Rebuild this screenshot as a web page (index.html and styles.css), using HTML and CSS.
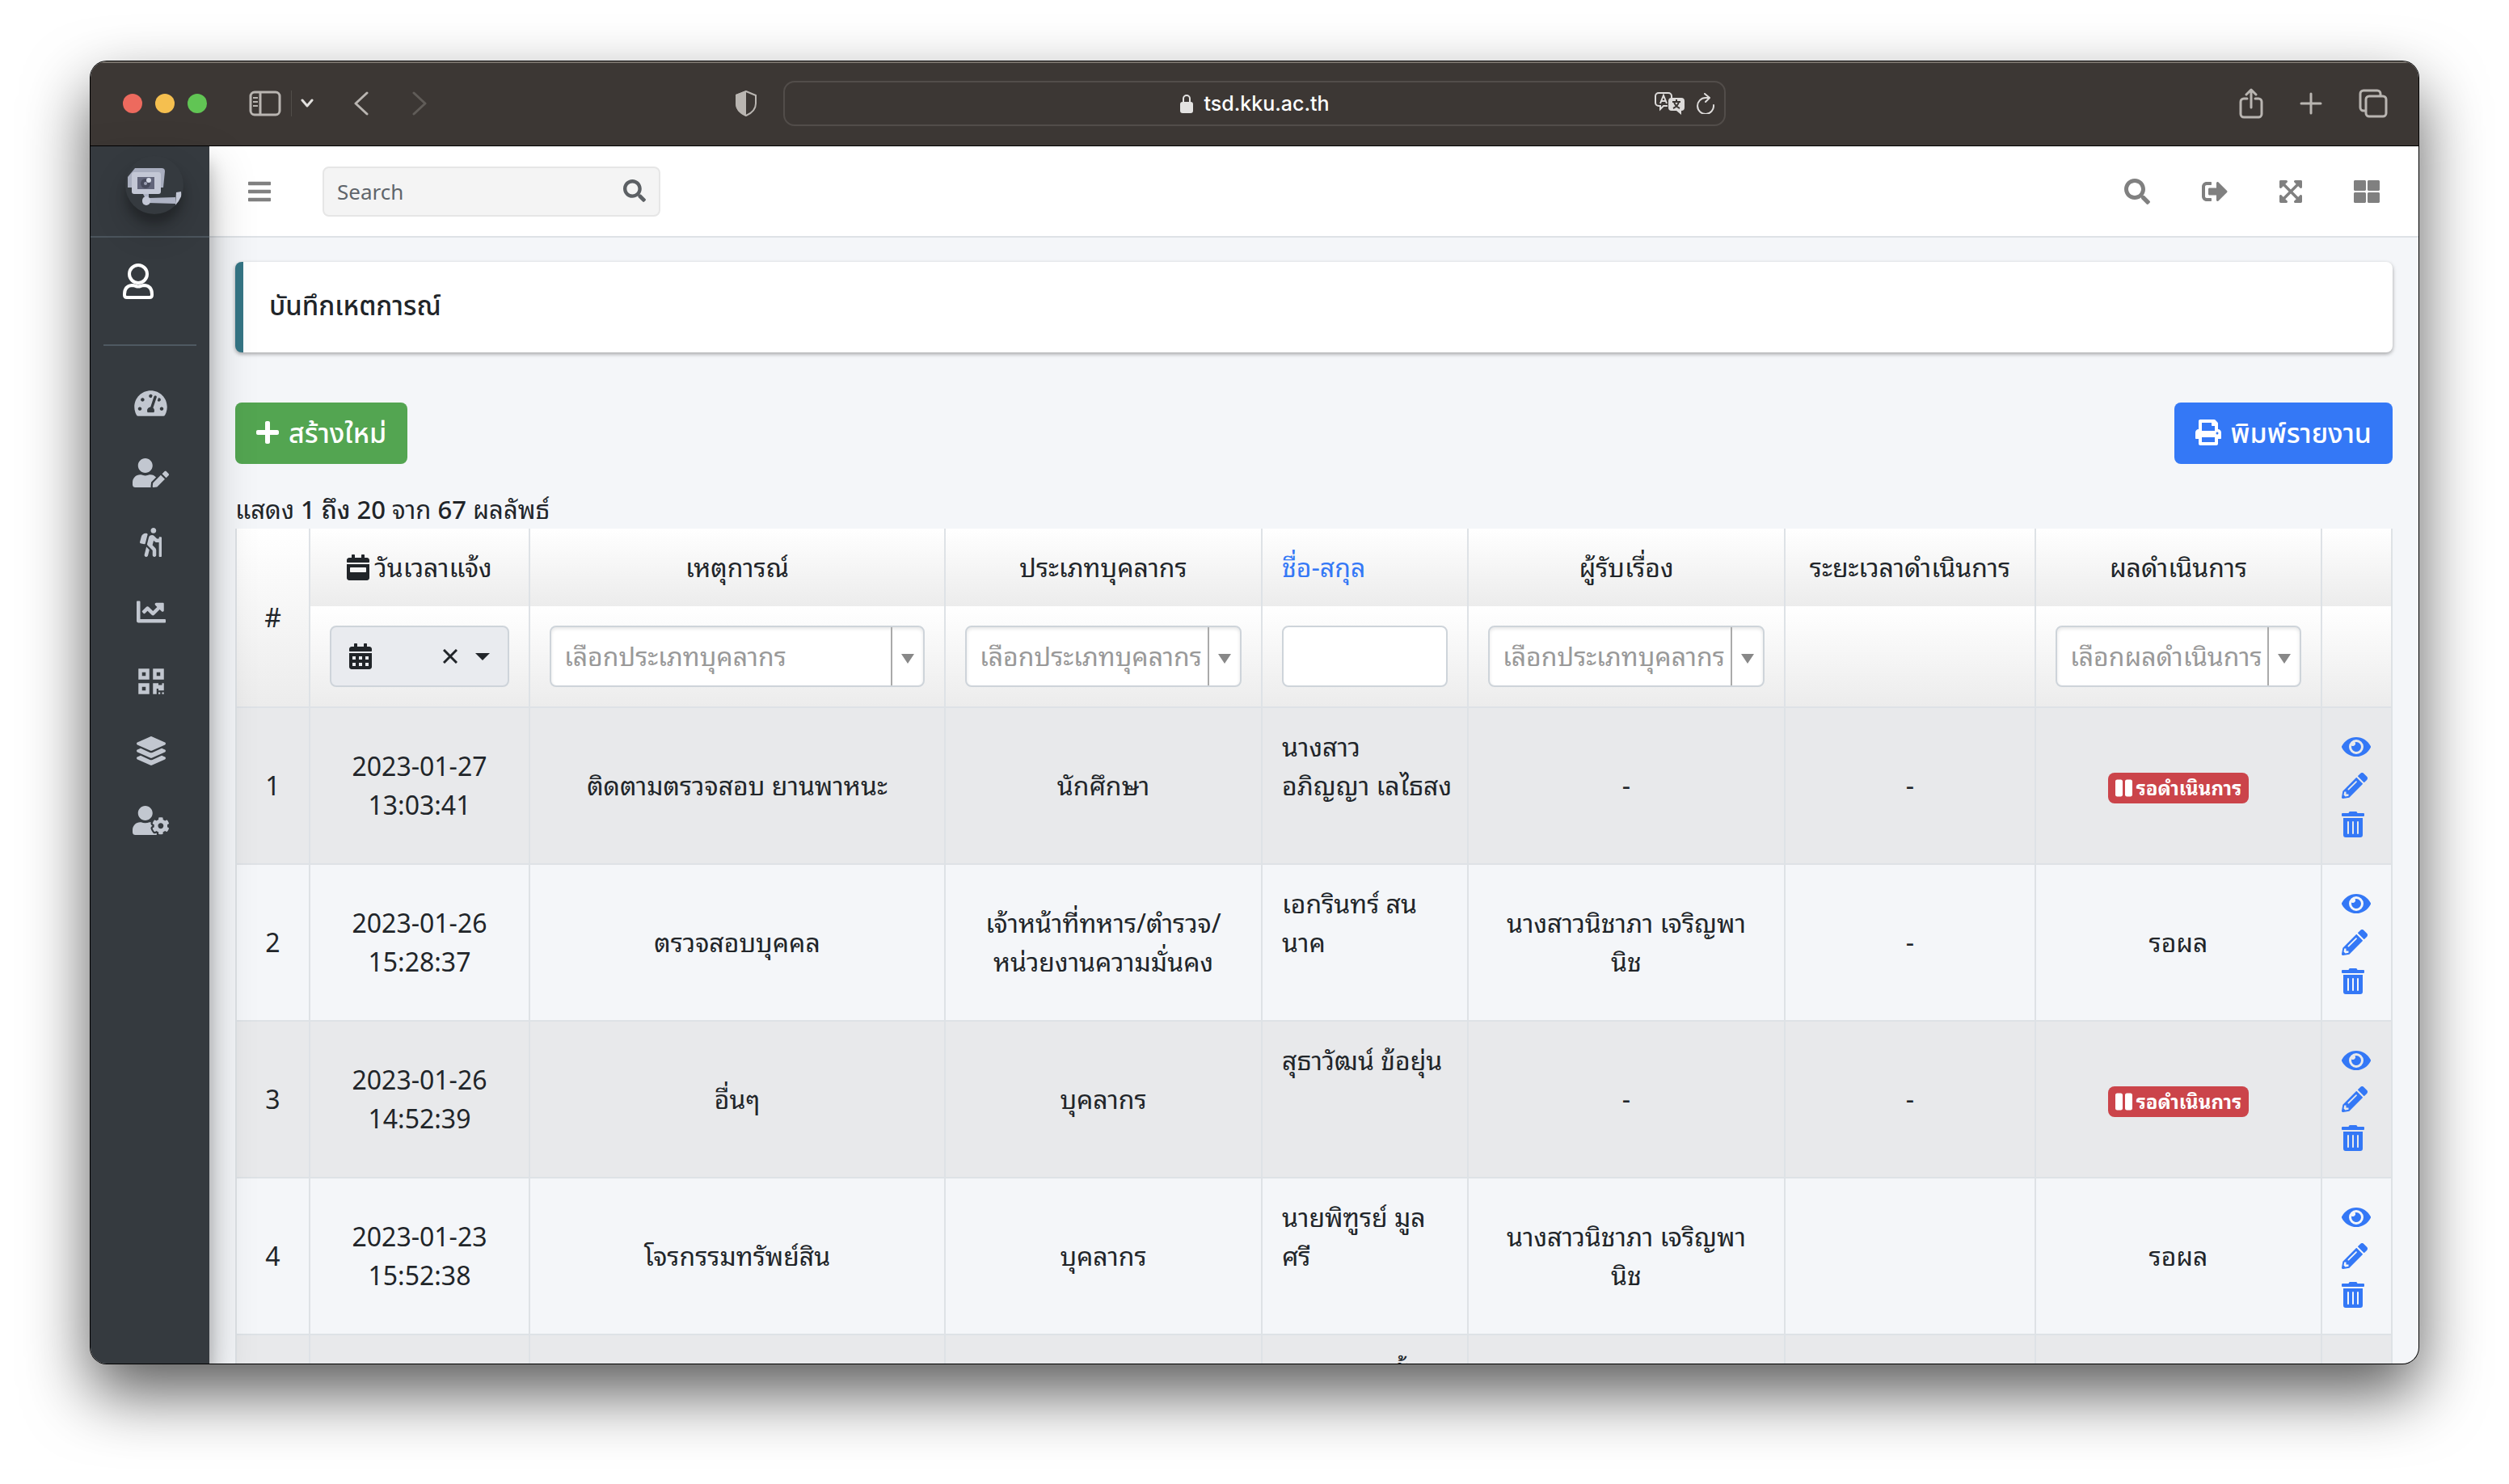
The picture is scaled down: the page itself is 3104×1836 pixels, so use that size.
FILE: index.html
```html
<!DOCTYPE html>
<html lang="th">
<head>
<meta charset="utf-8">
<title>บันทึกเหตการณ์</title>
<link rel="stylesheet" href="styles.css">
</head>
<body>
<svg class="sprite" aria-hidden="true">
  <symbol id="bars" viewBox="0 0 448 512"><path d="M16 132h416c8.837 0 16-7.163 16-16V76c0-8.837-7.163-16-16-16H16C7.163 60 0 67.163 0 76v40c0 8.837 7.163 16 16 16zm0 160h416c8.837 0 16-7.163 16-16v-40c0-8.837-7.163-16-16-16H16c-8.837 0-16 7.163-16 16v40c0 8.837 7.163 16 16 16zm0 160h416c8.837 0 16-7.163 16-16v-40c0-8.837-7.163-16-16-16H16c-8.837 0-16 7.163-16 16v40c0 8.837 7.163 16 16 16z"/></symbol>
  <symbol id="search" viewBox="0 0 512 512"><path d="M505 442.7L405.3 343c-4.5-4.5-10.6-7-17-7H372c27.6-35.3 44-79.7 44-128C416 93.1 322.9 0 208 0S0 93.1 0 208s93.1 208 208 208c48.3 0 92.7-16.4 128-44v16.3c0 6.4 2.5 12.5 7 17l99.7 99.7c9.4 9.4 24.6 9.4 33.9 0l28.3-28.3c9.4-9.4 9.4-24.6.1-34zM208 336c-70.7 0-128-57.2-128-128 0-70.7 57.2-128 128-128 70.7 0 128 57.2 128 128 0 70.7-57.2 128-128 128z"/></symbol>
  <symbol id="signout" viewBox="0 0 512 512"><path d="M497 273L329 441c-15 15-41 4.5-41-17v-96H152c-13.3 0-24-10.7-24-24v-96c0-13.3 10.7-24 24-24h136V88c0-21.4 25.9-32 41-17l168 168c9.3 9.4 9.3 24.6 0 34zM192 436v-40c0-6.6-5.4-12-12-12H96c-17.7 0-32-14.3-32-32V160c0-17.7 14.3-32 32-32h84c6.6 0 12-5.4 12-12V76c0-6.6-5.4-12-12-12H96c-53 0-96 43-96 96v192c0 53 43 96 96 96h84c6.6 0 12-5.4 12-12z"/></symbol>
  <symbol id="expand" viewBox="0 0 448 512"><path d="M448 344v112a23.94 23.94 0 0 1-24 24H312c-21.39 0-32.09-25.9-17-41l36.2-36.2L224 295.6 116.77 402.9 153 439c15.09 15.1 4.39 41-17 41H24a23.94 23.94 0 0 1-24-24V344c0-21.4 25.89-32.1 41-17l36.19 36.2L184.46 256 77.18 148.7 41 185c-15.1 15.1-41 4.4-41-17V56a23.94 23.94 0 0 1 24-24h112c21.39 0 32.09 25.9 17 41l-36.2 36.2L224 216.4l107.23-107.3L295 73c-15.09-15.1-4.39-41 17-41h112a23.94 23.94 0 0 1 24 24v112c0 21.4-25.89 32.1-41 17l-36.19-36.2L263.54 256l107.28 107.3L407 327.1c15.1-15.2 41-4.5 41 16.9z"/></symbol>
  <symbol id="tiles" viewBox="0 0 512 512"><path d="M296 32h192c13.255 0 24 10.745 24 24v160c0 13.255-10.745 24-24 24H296c-13.255 0-24-10.745-24-24V56c0-13.255 10.745-24 24-24zm-80 0H24C10.745 32 0 42.745 0 56v160c0 13.255 10.745 24 24 24h192c13.255 0 24-10.745 24-24V56c0-13.255-10.745-24-24-24zM0 296v160c0 13.255 10.745 24 24 24h192c13.255 0 24-10.745 24-24V296c0-13.255-10.745-24-24-24H24c-13.255 0-24 10.745-24 24zm296 184h192c13.255 0 24-10.745 24-24V296c0-13.255-10.745-24-24-24H296c-13.255 0-24 10.745-24 24v160c0 13.255 10.745 24 24 24z"/></symbol>
  <symbol id="gauge" viewBox="0 0 576 512"><path d="M288 32C128.94 32 0 160.94 0 320c0 52.8 14.25 102.26 39.06 144.8 5.61 9.62 16.3 15.2 27.44 15.2h443c11.14 0 21.83-5.58 27.44-15.2C561.75 422.26 576 372.8 576 320c0-159.06-128.94-288-288-288zm0 64c14.71 0 26.58 10.13 30.32 23.65-1.11 2.26-2.64 4.23-3.45 6.67l-9.22 27.67c-5.13 3.49-10.97 6.01-17.64 6.01-17.67 0-32-14.33-32-32S270.33 96 288 96zM96 384c-17.67 0-32-14.33-32-32s14.33-32 32-32 32 14.33 32 32-14.33 32-32 32zm48-160c-17.67 0-32-14.33-32-32s14.33-32 32-32 32 14.33 32 32-14.33 32-32 32zm246.77-72.41l-61.33 184C343.13 347.33 352 364.54 352 384c0 11.72-3.38 22.55-8.88 32H232.88c-5.5-9.45-8.88-20.28-8.88-32 0-33.94 26.5-61.43 59.9-63.59l61.34-184.01c4.17-12.56 17.73-19.45 30.36-15.17 12.57 4.19 19.35 17.79 15.17 30.36zm14.66 57.2l15.52-46.55c3.47-1.29 7.13-2.23 11.05-2.23 17.67 0 32 14.33 32 32s-14.33 32-32 32c-11.38-.01-20.89-6.28-26.57-15.22zM480 384c-17.67 0-32-14.33-32-32s14.33-32 32-32 32 14.33 32 32-14.33 32-32 32z"/></symbol>
  <symbol id="user-edit" viewBox="0 0 640 512"><path d="M224 256c70.7 0 128-57.3 128-128S294.7 0 224 0 96 57.3 96 128s57.3 128 128 128zm89.6 32h-16.7c-22.2 10.2-46.9 16-72.9 16s-50.6-5.8-72.9-16h-16.7C60.2 288 0 348.2 0 422.4V464c0 26.5 21.5 48 48 48h274.9c-2.4-6.8-3.4-14-2.6-21.3l6.8-60.9 1.2-11.1 7.9-7.9 77.3-77.3c-24.5-27.7-60-45.5-99.9-45.5zm45.3 145.3l-6.8 61c-1.1 10.2 7.5 18.8 17.6 17.6l60.9-6.8 137.9-137.9-71.7-71.7-137.9 137.8zM633 268.9L595.1 231c-9.3-9.3-24.5-9.3-33.8 0l-37.8 37.8-4.1 4.1 71.8 71.7 41.8-41.8c9.3-9.4 9.3-24.5 0-33.9z"/></symbol>
  <symbol id="hiking" viewBox="0 0 384 512"><path d="M80.95 472.23c-4.28 17.16 6.14 34.53 23.28 38.81 2.61.66 5.22.95 7.8.95 14.33 0 27.37-9.7 31.02-24.23l25.24-100.97-52.78-52.78-34.56 138.22zm14.89-196.12L137 117c2.19-8.42-3.14-16.95-11.92-19.06-43.88-10.52-88.35 15.07-99.32 57.17L.49 253.24c-2.19 8.42 3.14 16.95 11.92 19.06l63.56 15.25c8.79 2.1 17.68-3.02 19.87-11.44zM368 160h-16c-8.84 0-16 7.16-16 16v16h-34.75l-46.78-46.78C243.38 134.11 228.61 128 212.91 128c-27.02 0-50.47 18.3-57.03 44.52l-26.92 107.72a32.012 32.012 0 0 0 8.42 30.39L224 397.25V480c0 17.67 14.33 32 32 32s32-14.33 32-32v-82.75c0-17.09-6.66-33.16-18.75-45.25l-46.82-46.82c.15-.5.49-.89.62-1.41l19.89-79.57 22.43 22.43c6 6 14.14 9.38 22.62 9.38h48v240c0 8.84 7.16 16 16 16h16c8.84 0 16-7.16 16-16V176c.01-8.84-7.15-16-15.99-16zM240 96c26.51 0 48-21.49 48-48S266.51 0 240 0s-48 21.49-48 48 21.49 48 48 48z"/></symbol>
  <symbol id="chart" viewBox="0 0 512 512"><path d="M496 384H64V80c0-8.84-7.16-16-16-16H16C7.16 64 0 71.16 0 80v336c0 17.67 14.33 32 32 32h464c8.84 0 16-7.16 16-16v-32c0-8.84-7.16-16-16-16zM464 96H345.94c-21.38 0-32.09 25.85-16.97 40.97l32.4 32.4L288 242.75l-73.37-73.37c-12.5-12.5-32.76-12.5-45.25 0l-68.69 68.69c-6.25 6.25-6.25 16.38 0 22.63l22.62 22.62c6.25 6.25 16.38 6.25 22.63 0L192 237.25l73.37 73.37c12.5 12.5 32.76 12.5 45.25 0l96-96 32.4 32.4c15.12 15.12 40.97 4.41 40.97-16.97V112c.01-8.84-7.15-16-15.99-16z"/></symbol>
  <symbol id="qrcode" viewBox="0 0 448 512"><path d="M0 224h192V32H0v192zM64 96h64v64H64V96zm192-64v192h192V32H256zm128 128h-64V96h64v64zM0 480h192V288H0v192zm64-128h64v64H64v-64zm352-64h32v128h-96v-32h-32v96h-64V288h96v32h64v-32zm0 160h32v32h-32v-32zm-64 0h32v32h-32v-32z"/></symbol>
  <symbol id="layers" viewBox="0 0 512 512"><path d="M12.41 148.02l232.94 105.67c6.8 3.09 14.49 3.09 21.29 0l232.94-105.67c16.55-7.51 16.55-32.52 0-40.03L266.65 2.31a25.607 25.607 0 0 0-21.29 0L12.41 107.98c-16.55 7.51-16.55 32.53 0 40.04zm487.18 88.28l-58.09-26.33-161.64 73.27c-7.56 3.43-15.59 5.17-23.86 5.17s-16.29-1.74-23.86-5.17L70.51 209.97l-58.1 26.33c-16.55 7.5-16.55 32.5 0 40l232.94 105.59c6.8 3.08 14.49 3.08 21.29 0L499.59 276.3c16.55-7.5 16.55-32.5 0-40zm0 127.8l-57.87-26.23-161.86 73.37c-7.56 3.43-15.59 5.17-23.86 5.17s-16.29-1.74-23.86-5.17L70.29 337.87 12.41 364.1c-16.55 7.5-16.55 32.5 0 40l232.94 105.59c6.8 3.08 14.49 3.08 21.29 0L499.59 404.1c16.55-7.5 16.55-32.5 0-40z"/></symbol>
  <symbol id="user-cog" viewBox="0 0 640 512"><path d="M610.5 373.3c2.6-14.1 2.6-28.5 0-42.6l25.8-14.9c3-1.7 4.3-5.2 3.3-8.5-6.7-21.6-18.2-41.2-33.2-57.4-2.3-2.5-6-3.1-9-1.4l-25.8 14.9c-10.9-9.3-23.4-16.5-36.9-21.3v-29.8c0-3.4-2.4-6.4-5.7-7.1-22.3-5-45-4.8-66.2 0-3.3.7-5.7 3.7-5.7 7.1v29.8c-13.5 4.8-26 12-36.9 21.3l-25.8-14.9c-2.9-1.7-6.7-1.1-9 1.4-15 16.2-26.5 35.8-33.2 57.4-1 3.3.4 6.8 3.3 8.5l25.8 14.9c-2.6 14.1-2.6 28.5 0 42.6l-25.8 14.9c-3 1.7-4.3 5.2-3.3 8.5 6.7 21.6 18.2 41.1 33.2 57.4 2.3 2.5 6 3.1 9 1.4l25.8-14.9c10.9 9.3 23.4 16.5 36.9 21.3v29.8c0 3.4 2.4 6.4 5.7 7.1 22.3 5 45 4.8 66.2 0 3.3-.7 5.7-3.7 5.7-7.1v-29.8c13.5-4.8 26-12 36.9-21.3l25.8 14.9c2.9 1.7 6.7 1.1 9-1.4 15-16.2 26.5-35.8 33.2-57.4 1-3.3-.4-6.8-3.3-8.5l-25.8-14.9zM496 400.5c-26.8 0-48.5-21.8-48.5-48.5s21.8-48.5 48.5-48.5 48.5 21.8 48.5 48.5-21.7 48.5-48.5 48.5zM224 256c70.7 0 128-57.3 128-128S294.7 0 224 0 96 57.3 96 128s57.3 128 128 128zm201.2 226.5c-2.3-1.2-4.6-2.6-6.8-3.9l-7.9 4.6c-6 3.4-12.8 5.3-19.6 5.3-10.9 0-21.4-4.6-28.9-12.6-18.3-19.8-32.3-43.9-40.2-69.6-5.5-17.7 1.9-36.4 17.9-45.7l7.9-4.6c-.1-2.6-.1-5.2 0-7.8l-7.9-4.6c-16-9.2-23.4-28-17.9-45.7.9-2.9 2.2-5.8 3.2-8.7-3.8-.3-7.5-1.2-11.4-1.2h-16.7c-22.2 10.2-46.9 16-72.9 16s-50.6-5.8-72.9-16h-16.7C60.2 288 0 348.2 0 422.4V464c0 26.5 21.5 48 48 48h352c10.1 0 19.5-3.2 27.2-8.5-1.2-3.8-2-7.7-2-11.8v-9.2z"/></symbol>
  <symbol id="plus" viewBox="0 0 448 512"><path d="M416 208H272V64c0-17.67-14.33-32-32-32h-32c-17.67 0-32 14.33-32 32v144H32c-17.67 0-32 14.33-32 32v32c0 17.67 14.33 32 32 32h144v144c0 17.67 14.33 32 32 32h32c17.67 0 32-14.33 32-32V304h144c17.67 0 32-14.33 32-32v-32c0-17.67-14.33-32-32-32z"/></symbol>
  <symbol id="print" viewBox="0 0 512 512"><path d="M448 192V77.25c0-8.49-3.37-16.62-9.37-22.63L393.37 9.37c-6-6-14.14-9.37-22.63-9.37H96C78.33 0 64 14.33 64 32v160c-35.35 0-64 28.65-64 64v112c0 8.84 7.16 16 16 16h48v96c0 17.67 14.33 32 32 32h320c17.67 0 32-14.33 32-32v-96h48c8.84 0 16-7.16 16-16V256c0-35.35-28.65-64-64-64zm-64 256H128v-96h256v96zm0-224H128V64h192v48c0 8.84 7.16 16 16 16h48v96zm48 72c-13.25 0-24-10.75-24-24 0-13.26 10.75-24 24-24s24 10.74 24 24c0 13.25-10.75 24-24 24z"/></symbol>
  <symbol id="calendar" viewBox="0 0 448 512"><path fill-rule="evenodd" d="M0 464c0 26.5 21.5 48 48 48h352c26.5 0 48-21.5 48-48V192H0v272zM64 268c0-7 5-12 12-12h296c7 0 12 5 12 12v72c0 7-5 12-12 12H76c-7 0-12-5-12-12zM436 160H12c-6.6 0-12-5.4-12-12v-36c0-26.5 21.5-48 48-48h48V12c0-6.6 5.4-12 12-12h40c6.6 0 12 5.4 12 12v52h128V12c0-6.6 5.4-12 12-12h40c6.6 0 12 5.4 12 12v52h48c26.5 0 48 21.5 48 48v36c0 6.6-5.4 12-12 12z"/></symbol>
  <symbol id="calendar-days" viewBox="0 0 448 512"><path fill-rule="evenodd" d="M0 464c0 26.5 21.5 48 48 48h352c26.5 0 48-21.5 48-48V192H0v272zM64 256h64v64H64zM192 256h64v64h-64zM320 256h64v64h-64zM64 384h64v64H64zM192 384h64v64h-64zM320 384h64v64h-64zM436 160H12c-6.6 0-12-5.4-12-12v-36c0-26.5 21.5-48 48-48h48V12c0-6.6 5.4-12 12-12h40c6.6 0 12 5.4 12 12v52h128V12c0-6.6 5.4-12 12-12h40c6.6 0 12 5.4 12 12v52h48c26.5 0 48 21.5 48 48v36c0 6.6-5.4 12-12 12z"/></symbol>
  <symbol id="eye" viewBox="0 0 576 512"><path d="M572.52 241.4C518.29 135.59 410.93 64 288 64S57.68 135.64 3.48 241.41a32.35 32.35 0 0 0 0 29.19C57.71 376.41 165.07 448 288 448s230.32-71.64 284.52-177.41a32.35 32.35 0 0 0 0-29.19zM288 400a144 144 0 1 1 144-144 143.93 143.93 0 0 1-144 144zm0-240a95.31 95.31 0 0 0-25.31 3.79 47.85 47.85 0 0 1-66.9 66.9A95.78 95.78 0 1 0 288 160z"/></symbol>
  <symbol id="pencil" viewBox="0 0 512 512"><path d="M498 142l-46 46c-5 5-13 5-17 0L324 77c-5-5-5-12 0-17l46-46c19-19 49-19 68 0l60 60c19 19 19 49 0 68zm-214-42L22 362 0 484c-3 16 12 30 28 28l122-22 262-262c5-5 5-13 0-17L301 100c-4-5-12-5-17 0zM124 340c-5-6-5-14 0-20l154-154c6-5 14-5 20 0s5 14 0 20L144 340c-6 5-14 5-20 0zm-36 84h48v36l-64 12-32-31 12-65h36v48z"/></symbol>
  <symbol id="trash" viewBox="0 0 448 512"><path d="M32 464a48 48 0 0 0 48 48h288a48 48 0 0 0 48-48V128H32zm272-256a16 16 0 0 1 32 0v224a16 16 0 0 1-32 0zm-96 0a16 16 0 0 1 32 0v224a16 16 0 0 1-32 0zm-96 0a16 16 0 0 1 32 0v224a16 16 0 0 1-32 0zM432 32H312l-9-19a24 24 0 0 0-22-13H167a24 24 0 0 0-22 13l-9 19H16A16 16 0 0 0 0 48v32a16 16 0 0 0 16 16h416a16 16 0 0 0 16-16V48a16 16 0 0 0-16-16z"/></symbol>
  <symbol id="pause" viewBox="0 0 448 512"><path d="M144 479H48c-26.5 0-48-21.5-48-48V79c0-26.5 21.5-48 48-48h96c26.5 0 48 21.5 48 48v352c0 26.5-21.5 48-48 48zm304-48V79c0-26.5-21.5-48-48-48h-96c-26.5 0-48 21.5-48 48v352c0 26.5 21.5 48 48 48h96c26.5 0 48-21.5 48-48z"/></symbol>
</svg>

<div class="window">
  <header class="toolbar">
    <div class="toolbar-left">
      <span class="light red"></span><span class="light yellow"></span><span class="light green"></span>
      <button class="tool sidebar-toggle" aria-label="Sidebar"><svg width="40" height="32" viewBox="0 0 40 32" fill="none" stroke="#b9b5b1" stroke-width="3"><rect x="2" y="2" width="36" height="28" rx="5"/><path d="M14 2v28"/><path stroke-width="2" d="M5 9h6M5 14h6M5 19h6"/></svg></button>
      <button class="tool tab-groups" aria-label="Tab groups"><svg width="16" height="12" viewBox="0 0 16 12" fill="none" stroke="#e2e0de" stroke-width="3" stroke-linecap="round" stroke-linejoin="round"><path d="M2 2l6 7 6-7"/></svg></button>
      <button class="tool back" aria-label="Back"><svg width="18" height="30" viewBox="0 0 18 30" fill="none" stroke="#b9b5b1" stroke-width="3" stroke-linecap="round" stroke-linejoin="round"><path d="M16 2L2 15l14 13"/></svg></button>
      <button class="tool forward" aria-label="Forward"><svg width="18" height="30" viewBox="0 0 18 30" fill="none" stroke="#605c58" stroke-width="3" stroke-linecap="round" stroke-linejoin="round"><path d="M2 2l14 13L2 28"/></svg></button>
      <button class="tool shield" aria-label="Privacy report"><svg width="28" height="34" viewBox="0 0 28 34"><path d="M14 2l12 5v10c0 7-5 12-12 15C7 29 2 24 2 17V7z" fill="none" stroke="#b9b5b1" stroke-width="2"/><path d="M14 1L1 6v11c0 8 6 13 13 16z" fill="#b9b5b1"/></svg></button>
    </div>
    <div class="address">
      <span class="site"><svg width="18" height="24" viewBox="0 0 18 24"><rect x="1" y="10" width="16" height="14" rx="3" fill="#e3e2e1"/><path d="M5 11V6a4 4 0 0 1 8 0v5" fill="none" stroke="#e3e2e1" stroke-width="2"/></svg>tsd.kku.ac.th</span>
      <span class="address-actions">
        <button class="tool" aria-label="Translate"><svg width="38" height="28" viewBox="0 0 38 28"><path d="M16 17h-5l-4 4v-4H5a4 4 0 0 1-4-4V5a4 4 0 0 1 4-4h12a4 4 0 0 1 4 4v2" fill="none" stroke="#dddbda" stroke-width="2"/><path d="M7 14l4-10 4 10M8 11h6" fill="none" stroke="#dddbda" stroke-width="2"/><path d="M21 7h12a4 4 0 0 1 4 4v8a4 4 0 0 1-4 4v5l-6-5h-6a4 4 0 0 1-4-4v-8a4 4 0 0 1 4-4z" fill="#dddbda"/><path d="M22 12h10M27 9v3M23 20c4-2 6-4 7-8M31 20c-4-2-6-4-7-8" fill="none" stroke="#3c3734" stroke-width="2"/></svg></button>
        <button class="tool" aria-label="Reload"><svg width="22" height="26" viewBox="0 0 22 26" fill="none" stroke="#dddbda" stroke-width="2" stroke-linecap="round" stroke-linejoin="round"><path d="M21 15a10 10 0 1 1-10-9h4M10 1l6 5-5 5"/></svg></button>
      </span>
    </div>
    <div class="toolbar-right">
      <button class="tool" aria-label="Share"><svg width="30" height="38" viewBox="0 0 30 38" fill="none" stroke="#b9b5b1" stroke-width="3" stroke-linecap="round" stroke-linejoin="round"><path d="M10 13H6a4 4 0 0 0-4 4v15a4 4 0 0 0 4 4h18a4 4 0 0 0 4-4V17a4 4 0 0 0-4-4h-4M15 24V3M9 8l6-6 6 6"/></svg></button>
      <button class="tool" aria-label="New tab"><svg width="28" height="28" viewBox="0 0 28 28" fill="none" stroke="#b9b5b1" stroke-width="3" stroke-linecap="round"><path d="M14 2v24M2 14h24"/></svg></button>
      <button class="tool" aria-label="Tab overview"><svg width="36" height="36" viewBox="0 0 36 36" fill="none" stroke="#b9b5b1" stroke-width="3"><rect x="9" y="9" width="25" height="25" rx="4"/><path d="M9 27H6a4 4 0 0 1-4-4V6a4 4 0 0 1 4-4h17a4 4 0 0 1 4 4v3"/></svg></button>
    </div>
  </header>

  <div class="app">
    <aside class="sidebar">
      <a class="brand" href="#" aria-label="Home"><svg width="72" height="72" viewBox="0 0 72 72"><path d="M12 15h33q4 0 4 4l-2 20H5L3 39V26z" fill="#a9aebf"/><rect x="8" y="20" width="36" height="27" rx="3" fill="#c3c7d5"/><rect x="15" y="26" width="21" height="15" fill="#62657a"/><circle cx="25" cy="34" r="6" fill="#474a5c"/><circle cx="29" cy="30" r="3" fill="#d5d9e6"/><circle cx="25" cy="34" r="2" fill="#9b9fb3"/><path d="M22 47h7v5l33-1v8l-34-1z" fill="#aeb3c4"/><rect x="21" y="50" width="10" height="11" rx="5" fill="#c3c7d5"/><path d="M63 45l6-1q1 9-2 14l-4 4-1-1z" fill="#c3c7d5"/></svg></a>
      <a class="account" href="#" aria-label="Account"><svg width="38" height="44" viewBox="0 0 38 44" fill="none" stroke="#fff" stroke-width="4" stroke-linejoin="round"><circle cx="19" cy="13" r="11"/><path d="M11 27q-9 1-9 11v1q0 3 3 3h28q3 0 3-3v-1q0-10-9-11-3 0-5 1-3 1-6 0-2-1-5-1z"/></svg></a>
      <nav class="menu" aria-label="Main">
        <a href="#" aria-label="Dashboard"><svg width="41" height="36"><use href="#gauge"/></svg></a>
        <a href="#" aria-label="Records"><svg width="45" height="36"><use href="#user-edit"/></svg></a>
        <a href="#" aria-label="Patrol"><svg width="27" height="36"><use href="#hiking"/></svg></a>
        <a href="#" aria-label="Statistics"><svg width="36" height="36"><use href="#chart"/></svg></a>
        <a href="#" aria-label="QR code"><svg width="32" height="36"><use href="#qrcode"/></svg></a>
        <a href="#" aria-label="Categories"><svg width="36" height="36"><use href="#layers"/></svg></a>
        <a href="#" aria-label="Users"><svg width="45" height="36"><use href="#user-cog"/></svg></a>
      </nav>
    </aside>

    <div class="main">
      <div class="navbar">
        <button class="nav-icon" aria-label="Menu"><svg width="28" height="32"><use href="#bars"/></svg></button>
        <form class="search">
          <input type="search" placeholder="Search" aria-label="Search">
          <button type="button" aria-label="Search"><svg width="28" height="28"><use href="#search"/></svg></button>
        </form>
        <div class="nav-right">
          <a class="nav-icon" href="#" aria-label="Search"><svg width="32" height="32"><use href="#search"/></svg></a>
          <a class="nav-icon" href="#" aria-label="Sign out"><svg width="32" height="32"><use href="#signout"/></svg></a>
          <a class="nav-icon" href="#" aria-label="Full screen"><svg width="28" height="32"><use href="#expand"/></svg></a>
          <a class="nav-icon" href="#" aria-label="Apps"><svg width="32" height="32"><use href="#tiles"/></svg></a>
        </div>
      </div>

      <main class="content">
        <h1 class="callout">บันทึกเหตการณ์</h1>
        <div class="actions">
          <button class="btn btn-success"><svg width="28" height="32"><use href="#plus"/></svg>สร้างใหม่</button>
          <button class="btn btn-primary"><svg width="32" height="32"><use href="#print"/></svg>พิมพ์รายงาน</button>
        </div>
        <p class="summary">แสดง <b>1 ถึง 20</b> จาก <b>67</b> ผลลัพธ์</p>
        <table class="events">
          <colgroup><col class="c-no"><col class="c-date"><col><col class="c-type"><col class="c-name"><col class="c-type"><col class="c-time"><col class="c-result"><col class="c-tools"></colgroup>
          <thead>
            <tr>
              <th rowspan="2">#</th>
              <th><span class="with-icon"><svg width="28" height="32"><use href="#calendar"/></svg>วันเวลาแจ้ง</span></th>
              <th>เหตุการณ์</th><th>ประเภทบุคลากร</th><th class="name"><a href="#">ชื่อ-สกุล</a></th><th>ผู้รับเรื่อง</th><th>ระยะเวลาดำเนินการ</th><th>ผลดำเนินการ</th><th></th>
            </tr>
            <tr class="filters">
              <td><button class="date" aria-label="วันเวลาแจ้ง"><svg width="28" height="32"><use href="#calendar-days"/></svg><svg class="clear" width="18" height="18" viewBox="0 0 18 18" stroke="#212529" stroke-width="3"><path d="M1 1l16 16M17 1L1 17"/></svg><svg width="18" height="9" viewBox="0 0 18 9"><path d="M0 0h18L9 9z"/></svg></button></td>
              <td><label class="pick"><select aria-label="เหตุการณ์"><option>เลือกประเภทบุคลากร</option></select><span class="arrow"></span></label></td>
              <td><label class="pick"><select aria-label="ประเภทบุคลากร"><option>เลือกประเภทบุคลากร</option></select><span class="arrow"></span></label></td>
              <td><input class="text" type="text" aria-label="ชื่อ-สกุล"></td>
              <td><label class="pick"><select aria-label="ผู้รับเรื่อง"><option>เลือกประเภทบุคลากร</option></select><span class="arrow"></span></label></td>
              <td></td>
              <td><label class="pick"><select aria-label="ผลดำเนินการ"><option>เลือกผลดำเนินการ</option></select><span class="arrow"></span></label></td>
              <td></td>
            </tr>
          </thead>
          <tbody>
            <tr><td>1</td><td>2023-01-27<br>13:03:41</td><td>ติดตามตรวจสอบ ยานพาหนะ</td><td>นักศึกษา</td><td class="name">นางสาว<br>อภิญญา เลไธสง</td><td>-</td><td>-</td><td><span class="badge"><svg width="21" height="24"><use href="#pause"/></svg>รอดำเนินการ</span></td>
              <td class="tools"><a href="#" aria-label="ดู"><svg width="36" height="32"><use href="#eye"/></svg></a><a href="#" aria-label="แก้ไข"><svg width="32" height="32"><use href="#pencil"/></svg></a><a href="#" aria-label="ลบ"><svg width="28" height="32"><use href="#trash"/></svg></a></td></tr>
            <tr><td>2</td><td>2023-01-26<br>15:28:37</td><td>ตรวจสอบบุคคล</td><td>เจ้าหน้าที่ทหาร/ตำรวจ/<br>หน่วยงานความมั่นคง</td><td class="name">เอกรินทร์ สน<br>นาค</td><td>นางสาวนิชาภา เจริญพา<br>นิช</td><td>-</td><td>รอผล</td>
              <td class="tools"><a href="#" aria-label="ดู"><svg width="36" height="32"><use href="#eye"/></svg></a><a href="#" aria-label="แก้ไข"><svg width="32" height="32"><use href="#pencil"/></svg></a><a href="#" aria-label="ลบ"><svg width="28" height="32"><use href="#trash"/></svg></a></td></tr>
            <tr><td>3</td><td>2023-01-26<br>14:52:39</td><td>อื่นๆ</td><td>บุคลากร</td><td class="name">สุธาวัฒน์ ข้อยุ่น</td><td>-</td><td>-</td><td><span class="badge"><svg width="21" height="24"><use href="#pause"/></svg>รอดำเนินการ</span></td>
              <td class="tools"><a href="#" aria-label="ดู"><svg width="36" height="32"><use href="#eye"/></svg></a><a href="#" aria-label="แก้ไข"><svg width="32" height="32"><use href="#pencil"/></svg></a><a href="#" aria-label="ลบ"><svg width="28" height="32"><use href="#trash"/></svg></a></td></tr>
            <tr><td>4</td><td>2023-01-23<br>15:52:38</td><td>โจรกรรมทรัพย์สิน</td><td>บุคลากร</td><td class="name">นายพิฑูรย์ มูล<br>ศรี</td><td>นางสาวนิชาภา เจริญพา<br>นิช</td><td></td><td>รอผล</td>
              <td class="tools"><a href="#" aria-label="ดู"><svg width="36" height="32"><use href="#eye"/></svg></a><a href="#" aria-label="แก้ไข"><svg width="32" height="32"><use href="#pencil"/></svg></a><a href="#" aria-label="ลบ"><svg width="28" height="32"><use href="#trash"/></svg></a></td></tr>
            <tr><td></td><td></td><td></td><td></td><td class="name">นางสาวอร วั้น</td><td></td><td></td><td></td><td></td></tr>
          </tbody>
        </table>
      </main>
    </div>
  </div>
</div>
</body>
</html>
```

FILE: styles.css
```css
* { box-sizing: border-box; }

body {
  margin: 0;
  height: 100vh;
  padding: 76px 112px 149px;
  background: #fff;
  overflow: hidden;
  color: #212529;
  font: 32px/48px "Noto Sans", "Noto Sans Thai", sans-serif;
}

svg { display: block; flex: none; }
svg:not([fill]) { fill: currentColor; }
button, input, select { font: inherit; color: inherit; }
button { margin: 0; padding: 0; border: 0; background: none; }
a { color: #3478f6; text-decoration: none; }
.sprite { position: absolute; width: 0; height: 0; }

.window {
  display: flex;
  flex-direction: column;
  height: 100%;
  border-radius: 20px;
  overflow: hidden;
  background: #f4f6f9;
  box-shadow: 0 0 0 1px #000, 0 36px 80px rgba(0, 0, 0, .65);
}

/* Browser toolbar */
.toolbar {
  flex: none;
  display: grid;
  grid-template-columns: 1fr 1166px 1fr;
  align-items: center;
  height: 105px;
  background: #3c3734;
  border-bottom: 1px solid #000;
  box-shadow: inset 0 2px 0 #77716b;
}
.toolbar-left, .toolbar-right, .address, .site, .address-actions { display: flex; align-items: center; }
.toolbar-left { padding: 0 32px 0 40px; }
.light { width: 24px; height: 24px; margin-right: 16px; border-radius: 50%; }
.red { background: #ed6a5e; }
.yellow { background: #f5bf4f; }
.green { background: #61c554; }
.sidebar-toggle { margin-left: 36px; padding-right: 12px; border-right: 1px solid #524e4a; }
.tab-groups { margin-left: 11px; }
.back { margin-left: 50px; }
.forward { margin-left: 54px; }
.shield { margin-left: auto; }
.address {
  position: relative;
  justify-content: center;
  height: 56px;
  border: 2px solid #524d4a;
  border-radius: 14px;
  color: #fff;
  font: 500 25px/32px Inter, sans-serif;
}
.site { gap: 12px; }
.address-actions { position: absolute; right: 12px; gap: 14px; }
.toolbar-right { justify-content: flex-end; gap: 45px; padding-right: 38px; }

/* Sidebar */
.app { flex: 1; display: flex; min-height: 0; }
.sidebar {
  position: relative;
  z-index: 1;
  flex: none;
  width: 147px;
  background: #353a3f;
  color: #c2c7d0;
  box-shadow: 0 28px 56px rgba(0, 0, 0, .25), 0 20px 20px rgba(0, 0, 0, .22);
}
.brand { display: block; height: 113px; padding: 12px 43px; border-bottom: 2px solid #4b545c; }
.brand svg { border-radius: 50%; box-shadow: 0 20px 40px rgba(0, 0, 0, .19), 0 12px 12px rgba(0, 0, 0, .23); }
.account { display: block; height: 134px; margin: 0 16px; padding: 32px 24px; border-bottom: 2px solid #4f5962; }
.menu { padding-top: 28px; }
.menu a { display: flex; align-items: center; justify-content: center; height: 86px; padding-left: 2px; color: inherit; }

/* Top bar */
.main { flex: 1; min-width: 0; }
.navbar { display: flex; align-items: center; height: 113px; padding: 0 48px; background: #fff; border-bottom: 2px solid #dee2e6; }
.nav-icon { color: #808080; }
.search { display: flex; width: 418px; height: 62px; margin-left: 64px; border: 2px solid #e6e6e6; border-radius: 8px; background: #f4f4f4; }
.search input { flex: 1; min-width: 0; padding: 0 16px; border: 0; background: none; outline: 0; font-size: 26px; }
.search input::placeholder { color: #5f656b; opacity: 1; }
.search button { display: flex; justify-content: center; width: 60px; padding-top: 14px; color: #5c6064; }
.nav-right { display: flex; gap: 64px; margin-left: auto; }

/* Page */
.content { padding: 30px 32px; }
.callout {
  margin: 0 0 62px;
  padding: 30px 32px 34px;
  border-left: 10px solid #357585;
  border-radius: 8px;
  background: #fff;
  box-shadow: 0 2px 6px rgba(0, 0, 0, .12), 0 2px 4px rgba(0, 0, 0, .24);
  font-size: 33px;
  font-weight: 500;
  line-height: 48px;
}
.actions { display: flex; justify-content: space-between; }
.btn { display: flex; align-items: center; gap: 12px; height: 76px; padding: 0 26px 2px; border-radius: 8px; color: #fff; font-size: 34px; font-weight: 500; }
.btn-success { background: #53a551; }
.btn-primary { background: #3478f6; }
.summary, .events { font-family: "Noto Sans", "Noto Sans Thai Looped", Sarabun, Loma, Garuda, sans-serif; }
.summary { margin: 32px 0 0; font-size: 31px; }
.summary b { font-weight: 500; }

/* Events table */
.events {
  width: 100%;
  table-layout: fixed;
  border-collapse: separate;
  border-spacing: 0;
  border-left: 2px solid #dee2e6;
}
.c-no { width: 91px; }
.c-date { width: 272px; }
.c-type { width: 392px; }
.c-name { width: 255px; }
.c-time { width: 310px; }
.c-result { width: 354px; }
.c-tools { width: 87px; }
.events th, .events td { padding: 24px; border-right: 2px solid #dee2e6; text-align: center; vertical-align: middle; font-weight: 400; white-space: nowrap; }
.events thead th, .events thead td { background: linear-gradient(#fff, #ececec); }
.events th[rowspan], .events td { border-bottom: 2px solid #dee2e6; }
.events tbody tr:nth-child(odd) { background: #e8e9eb; }
.events .name { text-align: left; vertical-align: top; }
.with-icon { display: flex; align-items: center; justify-content: center; gap: 6px; }
.filters td { height: 126px; }
.pick, .date { display: flex; align-items: center; width: 100%; height: 76px; border: 2px solid #ced4da; border-radius: 8px; background: #fff; }
.pick { box-shadow: inset 0 2px 4px rgba(0, 0, 0, .1); }
.pick select { flex: 1; min-width: 0; height: 72px; padding: 0 0 0 16px; border: 0; background: none; appearance: none; color: #999; }
.arrow { flex: none; display: flex; align-items: center; justify-content: center; align-self: stretch; width: 40px; border-left: 2px solid #aaa; }
.arrow::after { content: ""; margin-top: 6px; border: 8px solid transparent; border-top: 12px solid #888; border-bottom: 0; }
.text { display: block; width: 100%; height: 76px; border: 2px solid #ced4da; border-radius: 8px; background: #fff; }
.date { padding: 0 22px; background: #e9ebef; }
.clear { margin: 0 22px 0 auto; }
.badge { display: inline-flex; align-items: center; gap: 5px; height: 38px; padding: 0 9px; border-radius: 8px; background: #cb444a; color: #fff; font-size: 24px; font-weight: 700; line-height: 36px; vertical-align: middle; }
.tools a { display: flex; align-items: center; height: 48px; }
```
